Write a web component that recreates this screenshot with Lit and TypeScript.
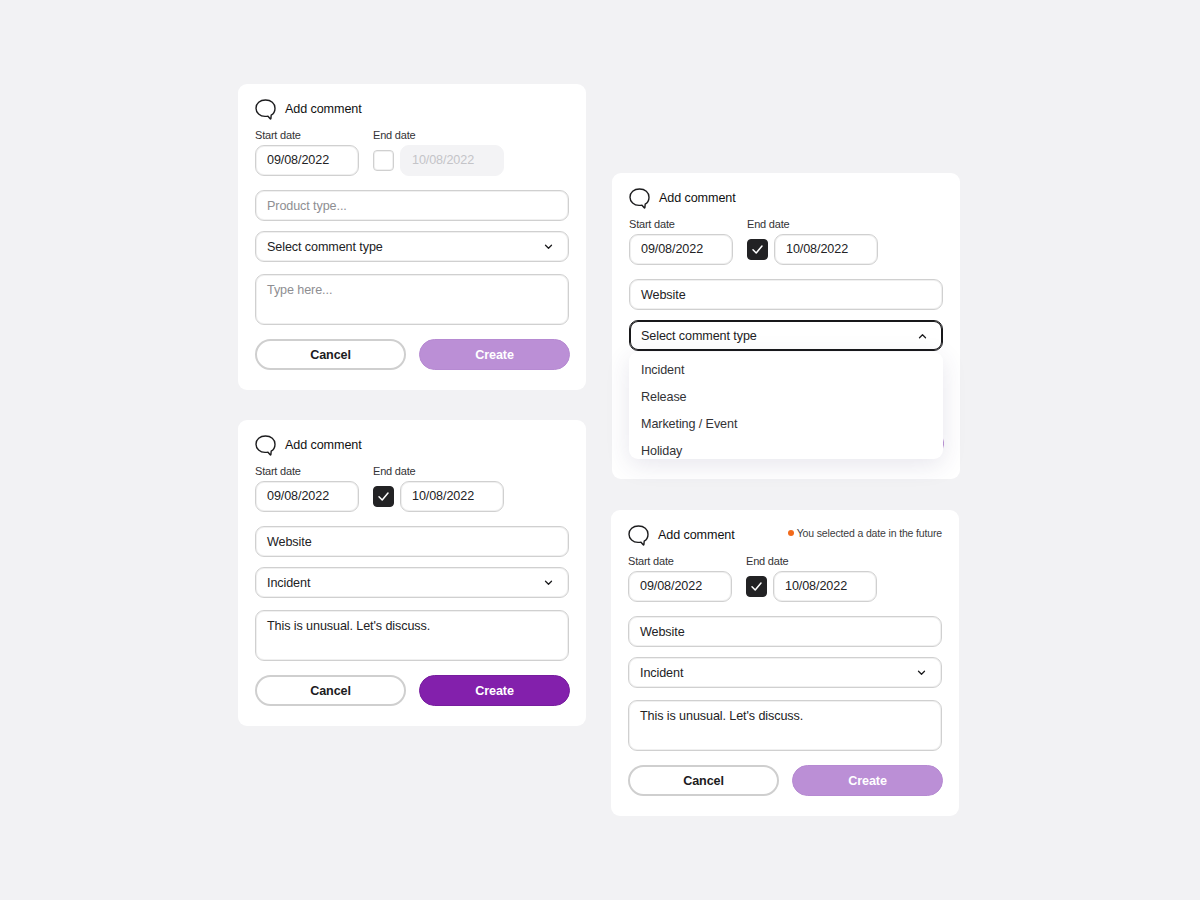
import { LitElement, html, css, svg } from "lit";
import { customElement, property } from "lit/decorators.js";

const bubble = svg`<path d="M10.5 1C5 1 1 4.4 1 9.200c0 4.600 4 8.100 9 8.200 1.400 0 2.400-.1 3-.2l2.200 2.600c.3.3.6.2.7-.2l.3-3.500c2.500-1.400 3.800-3.800 3.800-6.900C20 4.400 16 1 10.500 1Z" fill="none" stroke="#1c1c1e" stroke-width="1.400" stroke-linejoin="round"/>`;

@customElement("comment-card")
class CommentCard extends LitElement {
  @property({ type: Boolean }) checked = false;
  @property() product = "";
  @property() kind = "";
  @property() note = "";
  @property({ type: Boolean }) open = false;
  @property({ type: Boolean }) active = false;
  @property() warning = "";

  static styles = css`
    :host { display: block; width: 348px; height: 306px; box-sizing: border-box; padding: 14px 17px 0; background: #fff; border-radius: 9px; font-family: "Liberation Sans", Arial, sans-serif; color: #222224; position: relative; font-size: 12.6px; letter-spacing: -0.1px; }
    .head { display: flex; align-items: center; height: 22px; gap: 9px; font-size: 12.6px; color: #111; }
    .head svg { width: 21px; height: 21px; flex: none; }
    .title { padding-bottom: 1px; }
    .warning { margin-left: auto; display: flex; align-items: center; gap: 3px; font-size: 10.5px; letter-spacing: -0.15px; color: #3c3c40; padding-bottom: 4px; }
    .dot { width: 6px; height: 6px; border-radius: 50%; background: #f26a1b; }
    .dates { display: flex; margin-top: 8px; gap: 14px; }
    .label { font-size: 11px; letter-spacing: -0.2px; line-height: 14px; height: 17px; color: #333336; }
    .row { display: flex; align-items: center; gap: 6px; }
    .input { box-sizing: border-box; height: 31px; border: 1px solid #d0d0d0; box-shadow: inset 0 0 0 1px #f0f0f0; border-radius: 9px; display: flex; align-items: center; padding: 0 11px 1px; background: #fff; }
    .date { width: 104px; }
    .date.off { background: #f3f3f5; border-color: #f3f3f5; box-shadow: none; color: #c4c4c8; }
    .box { box-sizing: border-box; width: 21px; height: 21px; border: 1px solid #d0d0d0; box-shadow: inset 0 0 0 1px #f0f0f0; border-radius: 4px; background: #fff; display: flex; align-items: center; justify-content: center; }
    .box.on { background: #222224; border-color: #222224; box-shadow: none; }
    .box svg { width: 13px; height: 13px; }
    .full { margin-top: 14px; padding-bottom: 0; }
    .select { margin-top: 10px; justify-content: space-between; padding-right: 15px; padding-bottom: 0; }
    .select svg { width: 9px; height: 6px; }
    .select.open { border-color: #18181a; box-shadow: inset 0 0 0 1px #18181a; }
    .ph { color: #8e8e92; }
    .area { box-sizing: border-box; margin-top: 12px; height: 51px; border: 1px solid #d0d0d0; box-shadow: inset 0 0 0 1px #f0f0f0; border-radius: 9px; padding: 7px 11px; line-height: 16px; }
    .btns { display: flex; margin-top: 14px; gap: 13px; }
    .btn { box-sizing: border-box; height: 31px; width: 151px; flex: none; border-radius: 16px; display: flex; align-items: center; justify-content: center; font-size: 12.6px; font-weight: 700; }
    .cancel { border: 2px solid #cfcfcf; color: #1c1c1e; background: #fff; }
    .create { color: #fff; background: #bb8fd6; border: 1px solid #b68ad2; }
    .create.active { background: #8320ac; border-color: #771d9e; }
    .menu { position: absolute; left: 17px; right: 17px; top: 179px; height: 107px; overflow: hidden; background: #fff; border-radius: 9px; box-shadow: 0 6px 24px rgba(60, 50, 110, 0.12); color: #333336; padding-top: 4px; box-sizing: border-box; }
    .menu div { height: 27px; display: flex; align-items: center; padding-left: 12px; }
  `;

  render() {
    const chevron = this.open
      ? svg`<path d="M1.500 5.500 5 2l3.500 3.500" fill="none" stroke="#1c1c1e" stroke-width="1.500" stroke-linecap="round" stroke-linejoin="round"/>`
      : svg`<path d="M1.500 1.500 5 5l3.500-3.500" fill="none" stroke="#1c1c1e" stroke-width="1.500" stroke-linecap="round" stroke-linejoin="round"/>`;
    return html`
      <div class="head">
        <svg viewBox="0 0 21 21">${bubble}</svg>
        <span class="title">Add comment</span>
        ${this.warning ? html`<span class="warning"><i class="dot"></i>${this.warning}</span>` : ""}
      </div>
      <div class="dates">
        <div>
          <div class="label">Start date</div>
          <div class="input date">09/08/2022</div>
        </div>
        <div>
          <div class="label">End date</div>
          <div class="row">
            <div class="box ${this.checked ? "on" : ""}">
              ${this.checked ? html`<svg viewBox="0 0 13 13"><path d="M2 6.800 5.200 10 11 3" fill="none" stroke="#fff" stroke-width="1.500" stroke-linecap="round" stroke-linejoin="round"/></svg>` : ""}
            </div>
            <div class="input date ${this.checked ? "" : "off"}">10/08/2022</div>
          </div>
        </div>
      </div>
      <div class="input full ${this.product ? "" : "ph"}">${this.product || "Product type..."}</div>
      <div class="input select ${this.open ? "open" : ""}">
        <span>${this.kind || "Select comment type"}</span>
        <svg viewBox="0 0 10 7">${chevron}</svg>
      </div>
      <div class="area ${this.note ? "" : "ph"}">${this.open ? "" : this.note || "Type here..."}</div>
      <div class="btns">
        <div class="btn cancel">${this.open ? "" : "Cancel"}</div>
        <div class="btn create ${this.active ? "active" : ""}">${this.open ? "" : "Create"}</div>
      </div>
      ${this.open
        ? html`<div class="menu">${["Incident", "Release", "Marketing / Event", "Holiday"].map((o) => html`<div>${o}</div>`)}</div>`
        : ""}
    `;
  }
}

@customElement("app-root")
class AppRoot extends LitElement {
  static styles = css`
    :host { display: block; width: 1200px; height: 900px; background: #f2f2f4; overflow: hidden; }
    .page { display: flex; gap: 26px; padding-left: 238px; }
    .col { display: flex; flex-direction: column; gap: 30px; }
    .left { padding-top: 84px; }
    .right { padding-top: 173px; gap: 31px; }
    .shift { margin-left: -1px; }
  `;
  render() {
    const note = "This is unusual. Let's discuss.";
    return html`
      <div class="page">
        <div class="col left">
          <comment-card></comment-card>
          <comment-card checked active product="Website" kind="Incident" note=${note}></comment-card>
        </div>
        <div class="col right">
          <comment-card checked open product="Website" note=${note}></comment-card>
          <comment-card class="shift" checked product="Website" kind="Incident" note=${note} warning="You selected a date in the future"></comment-card>
        </div>
      </div>
    `;
  }
}
